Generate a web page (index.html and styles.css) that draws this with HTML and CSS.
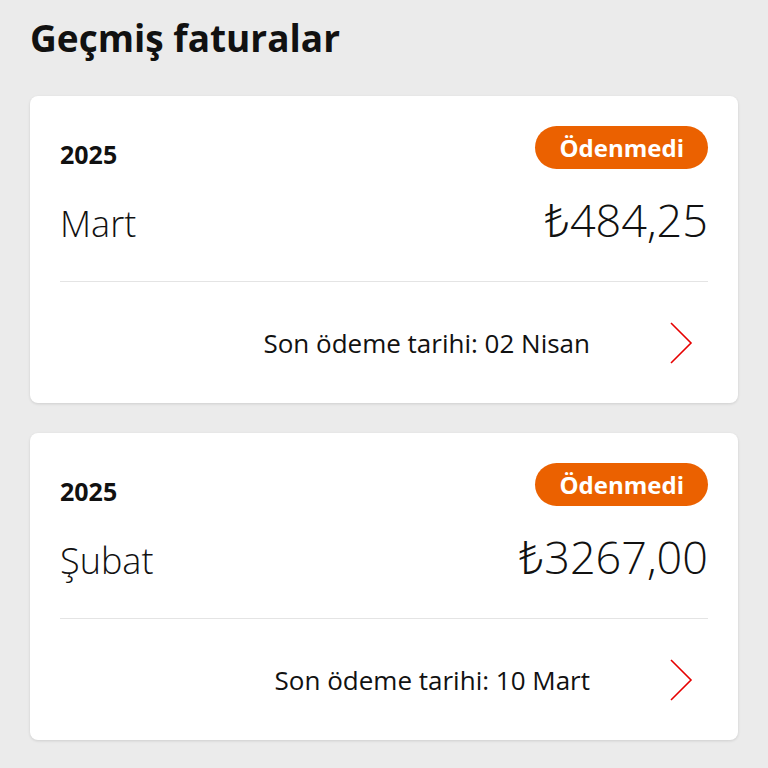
FILE: index.html
```html
<!DOCTYPE html>
<html lang="tr">
<head>
<meta charset="utf-8">
<link rel="stylesheet" href="styles.css">
</head>
<body>
<h1 class="title">Geçmiş faturalar</h1>
<div class="card">
  <div class="card-top">
    <div class="head">
      <span class="year">2025</span>
      <span class="badge">Ödenmedi</span>
    </div>
    <div class="row">
      <span class="month">Mart</span>
      <span class="amount">₺484,25</span>
    </div>
  </div>
  <div class="foot">
    <span class="due">Son ödeme tarihi: 02 Nisan</span>
    <svg class="chev" width="26" height="44" viewBox="0 0 26 44"><path d="M3 2 L23 22 L3 42" fill="none" stroke="#e60000" stroke-width="1.6"/></svg>
  </div>
</div>
<div class="card">
  <div class="card-top">
    <div class="head">
      <span class="year">2025</span>
      <span class="badge">Ödenmedi</span>
    </div>
    <div class="row">
      <span class="month">Şubat</span>
      <span class="amount">₺3267,00</span>
    </div>
  </div>
  <div class="foot">
    <span class="due">Son ödeme tarihi: 10 Mart</span>
    <svg class="chev" width="26" height="44" viewBox="0 0 26 44"><path d="M3 2 L23 22 L3 42" fill="none" stroke="#e60000" stroke-width="1.6"/></svg>
  </div>
</div>
</body>
</html>
```
FILE: styles.css
```css
html, body {
  margin: 0;
  padding: 0;
}
body {
  background: #ebebeb;
  font-family: "Open Sans", "Noto Sans", sans-serif;
  color: #111;
  padding: 0 30px;
}
.title {
  margin: 0;
  padding-top: 12px;
  height: 84px;
  font-size: 37px;
  font-weight: 700;
  line-height: 52px;
  letter-spacing: 0;
}
.card {
  background: #fff;
  border-radius: 8px;
  box-shadow: 0 1px 3px rgba(0,0,0,0.12);
  margin-bottom: 30px;
  height: 307px;
  box-sizing: border-box;
  display: flex;
  flex-direction: column;
}
.card-top {
  margin: 0 30px;
  padding-top: 30px;
  height: 186px;
  box-sizing: border-box;
  border-bottom: 1px solid #e4e4e4;
}
.head {
  display: flex;
  justify-content: space-between;
  align-items: flex-end;
  height: 43px;
}
.year {
  font-size: 25px;
  font-weight: 700;
  line-height: 30px;
}
.badge {
  background: #eb6100;
  color: #fff;
  font-size: 24px;
  font-weight: 700;
  height: 43px;
  line-height: 43px;
  padding: 0 24px 0 25px;
  border-radius: 22px;
}
.row {
  display: flex;
  justify-content: space-between;
  align-items: baseline;
  margin-top: 25px;
}
.month {
  font-size: 36px;
  font-weight: 300;
  line-height: 52px;
}
.amount {
  font-size: 45px;
  font-weight: 300;
  line-height: 52px;
}
.foot {
  flex: 1;
  display: flex;
  justify-content: flex-end;
  align-items: center;
  padding: 0 44px 0 30px;
}
.due {
  font-size: 26px;
  font-weight: 400;
  margin-right: 78px;
}
.chev {
  display: block;
}
```
